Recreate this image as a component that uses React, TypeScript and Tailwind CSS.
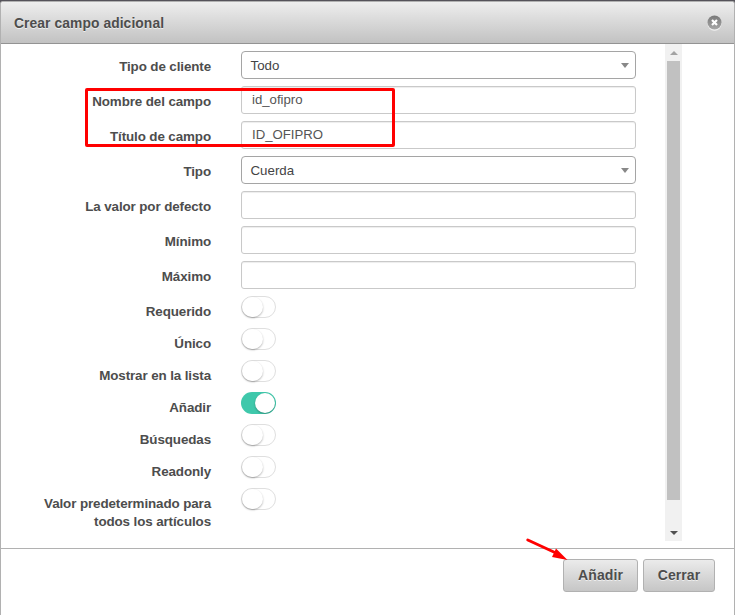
import React from "react";

type Field = { label: string; kind: "select" | "input"; value?: string };

const fields: Field[] = [
  { label: "Tipo de cliente", kind: "select", value: "Todo" },
  { label: "Nombre del campo", kind: "input", value: "id_ofipro" },
  { label: "Título de campo", kind: "input", value: "ID_OFIPRO" },
  { label: "Tipo", kind: "select", value: "Cuerda" },
  { label: "La valor por defecto", kind: "input" },
  { label: "Mínimo", kind: "input" },
  { label: "Máximo", kind: "input" },
];

const toggles = [
  { label: "Requerido", on: false },
  { label: "Único", on: false },
  { label: "Mostrar en la lista", on: false },
  { label: "Añadir", on: true },
  { label: "Búsquedas", on: false },
  { label: "Readonly", on: false },
  { label: "Valor predeterminado para todos los artículos", on: false },
];

function Label({ children }: { children: React.ReactNode }) {
  return (
    <div className="w-[180px] shrink-0 pt-[7px] text-right text-[13.4px] leading-[18px] font-bold tracking-[-0.11px] text-[#4d4d4d]">
      {children}
    </div>
  );
}

function Select({ value }: { value?: string }) {
  return (
    <div className="flex h-7 w-[395px] items-center justify-between rounded-[4px] border border-[#a5a5a5] bg-white pr-[6px] pl-[8.5px] text-[13.3px] text-[#444]">
      <span className="pt-[2px]">{value}</span>
      <svg width="8" height="5" viewBox="0 0 8 5" className="block">
        <path d="M0 0H8L4 5Z" fill="#888" />
      </svg>
    </div>
  );
}

function Input({ value }: { value?: string }) {
  return (
    <div className="flex h-7 w-[395px] items-center rounded-[3px] border border-[#c9c9c9] bg-white pb-px pl-[10px] text-[13.2px] text-[#555] shadow-[inset_0_1px_1px_rgba(0,0,0,0.075)]">
      {value}
    </div>
  );
}

function Toggle({ on }: { on: boolean }) {
  return on ? (
    <div className="flex h-[22px] w-[35px] items-center justify-end overflow-hidden rounded-full bg-[#3fc8ab] pr-px">
      <div className="h-5 w-5 rounded-full bg-white shadow-[0_1px_2px_rgba(0,0,0,0.3)]" />
    </div>
  ) : (
    <div className="flex h-[22px] w-[35px] rounded-full border border-[#dfdfdf] bg-white">
      <div className="h-5 w-[21px] shrink-0 rounded-full bg-white shadow-[0_1px_2px_rgba(0,0,0,0.3)]" />
    </div>
  );
}

function Button({ children, className }: { children: string; className: string }) {
  return (
    <button
      className={
        "h-[33px] rounded-[3px] border border-[#b1b1b1] bg-linear-to-b from-[#ebebeb] to-[#c6c6c6] pb-px text-center text-[14px] font-bold tracking-[0.1px] text-[#4d4d4d] [text-shadow:0_1px_0_#eee] " +
        className
      }
    >
      {children}
    </button>
  );
}

export default function App() {
  return (
    <div className="relative h-[615px] w-[735px] overflow-hidden bg-[#55535a] pt-px font-['Liberation_Sans',Arial,sans-serif]">
      <div className="flex h-[614px] flex-col rounded-t-[3px] border-x border-t border-[#b1b1b1] bg-white">
        <header className="flex h-[42px] shrink-0 items-center justify-between rounded-t-[2px] border-b border-[#939393] bg-linear-to-b from-[#eee] to-[#c2c2c2] pr-[12px] pl-[13px]">
          <h1 className="pt-[3px] text-[13.8px] font-bold tracking-[0.1px] text-[#4d4d4d] [text-shadow:0_1px_0_#eee]">
            Crear campo adicional
          </h1>
          <svg width="15" height="16" viewBox="0 0 15 16" className="block">
            <defs>
              <linearGradient id="close" x1="0" y1="0" x2="0" y2="1">
                <stop offset="0" stopColor="#787878" />
                <stop offset="1" stopColor="#a8a8a8" />
              </linearGradient>
            </defs>
            <circle cx="7.5" cy="8.7" r="7" fill="#f2f2f2" />
            <circle cx="7.5" cy="7.5" r="7" fill="url(#close)" />
            <path d="M5 5L10 10M10 5L5 10" stroke="#fff" strokeWidth="2.2" />
          </svg>
        </header>

        <main className="flex h-[505px] shrink-0 border-b border-[#b1b1b1]">
          <div className="w-[664px] pt-[7px] pl-[30px]">
            {fields.map((f) => (
              <div key={f.label} className="flex h-[35px] gap-[30px]">
                <Label>{f.label}</Label>
                {f.kind === "select" ? <Select value={f.value} /> : <Input value={f.value} />}
              </div>
            ))}
            {toggles.map((t) => (
              <div key={t.label} className="flex min-h-8 gap-[30px]">
                <Label>{t.label}</Label>
                <Toggle on={t.on} />
              </div>
            ))}
          </div>
          <div className="flex h-[497px] w-[17px] flex-col items-center bg-[#f1f1f1]">
            <div className="flex h-[17px] shrink-0 items-center justify-center">
              <svg width="8" height="4" viewBox="0 0 8 4">
                <path d="M0 4L4 0L8 4Z" fill="#a3a3a3" />
              </svg>
            </div>
            <div className="h-[439px] w-[13px] shrink-0 bg-[#c1c1c1]" />
            <div className="mt-auto flex h-[17px] items-center justify-center">
              <svg width="8" height="4" viewBox="0 0 8 4">
                <path d="M0 0L4 4L8 0Z" fill="#505050" />
              </svg>
            </div>
          </div>
        </main>

        <footer className="flex justify-end gap-[5px] pt-[10px] pr-[19px]">
          <Button className="w-[75px]">Añadir</Button>
          <Button className="w-[72px]">Cerrar</Button>
        </footer>
      </div>

      <div className="absolute top-[88px] left-[85px] h-[59px] w-[310px] rounded-[2px] border-3 border-[#f00]" />
      <svg className="absolute top-[534px] left-[522px]" width="50" height="30" viewBox="0 0 50 30">
        <path d="M5.8 6L34 19" stroke="#f00" strokeWidth="3" strokeLinecap="round" />
        <path d="M34 14.5L45.500 26L30 23Z" fill="#f00" />
      </svg>
    </div>
  );
}
